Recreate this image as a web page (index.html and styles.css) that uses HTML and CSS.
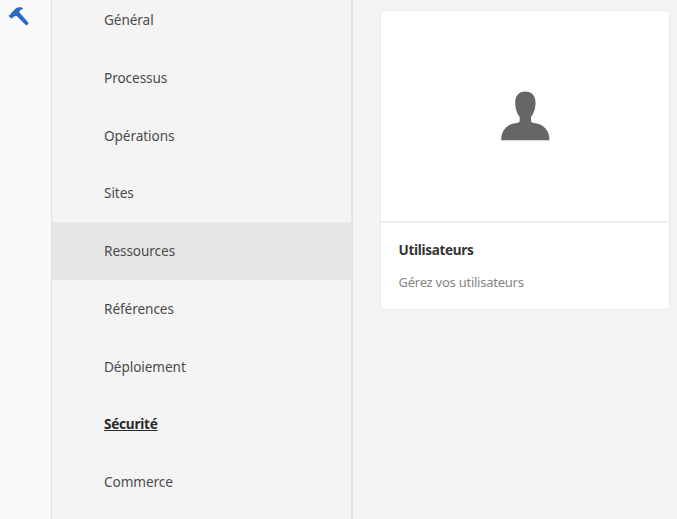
FILE: index.html
```html
<!DOCTYPE html>
<html lang="fr">
<head>
<meta charset="utf-8">
<title>Outils</title>
<link rel="stylesheet" href="styles.css">
</head>
<body>
<div class="shell">
  <aside class="rail">
    <svg class="hammer" viewBox="0 0 22 20" aria-hidden="true">
      <path d="M.4 8.700 L2.700 7.300 L3.500 5.700 L8 1.300 C10 -.1 13.500 -.1 15 1.400 L14.600 2.400 C12.500 2.200 11.200 3.300 11.500 5.600 L20.200 15.400 Q20.900 16.200 19.700 17.600 Q18.600 18.900 17.700 18 L8.700 8.900 L6.500 9.300 L5.300 10.200 L3.500 11.700 Z"/>
    </svg>
  </aside>
  <nav class="menu">
    <a class="item">Général</a>
    <a class="item">Processus</a>
    <a class="item">Opérations</a>
    <a class="item">Sites</a>
    <a class="item hovered">Ressources</a>
    <a class="item">Références</a>
    <a class="item">Déploiement</a>
    <a class="item selected">Sécurité</a>
    <a class="item">Commerce</a>
  </nav>
  <main class="content">
    <article class="card">
      <div class="preview">
        <svg class="user" viewBox="0 0 50 50" aria-hidden="true">
          <path d="M25.300 .5 C31.800 .5 35.500 4.500 35.500 12 C35.500 18.500 33.200 23 31 26 V29.500 C31 31.300 32 31.700 34.500 32 C44 33.200 49.500 39.500 49.500 49.200 H1.200 C1.200 39.500 6.700 33.200 16.200 32 C18.700 31.700 19.700 31.300 19.700 29.500 V26 C17.500 23 15.200 18.500 15.200 12 C15.200 4.500 18.900 .5 25.300 .5 Z"/>
        </svg>
      </div>
      <div class="caption">
        <h2 class="title">Utilisateurs</h2>
        <p class="text">Gérez vos utilisateurs</p>
      </div>
    </article>
  </main>
</div>
</body>
</html>
```
FILE: styles.css
```css
* { box-sizing: border-box; }
body {
  margin: 0;
  font-family: "Noto Sans", sans-serif;
  color: #4b4b4b;
  background: #f4f4f4;
  overflow: hidden;
}
.shell { display: flex; height: 519px; overflow: hidden; }
.rail {
  flex: 0 0 52px;
  padding: 7px 0 0 8px;
  background: #fafafa;
  border-right: 1px solid #e1e1e1;
}
.hammer { display: block; width: 22px; height: 20px; fill: #2969c8; }
.menu {
  flex: 0 0 301px;
  margin-top: -9px;
  border-right: 2px solid #e6e6e6;
}
.item {
  display: flex;
  align-items: center;
  height: 57.75px;
  padding: 0 0 0.7px 52px;
  font-size: 13.6px;
  letter-spacing: -0.07px;
}
.hovered { background: #e7e7e7; }
.selected { color: #292929; font-weight: 700; text-decoration: underline; letter-spacing: -0.25px; }
.content { flex: 1; padding: 9px 0 0 26px; }
.card {
  width: 292px;
  height: 302px;
  background: #fff;
  border: 2px solid #efefef;
  border-radius: 5px;
}
.preview {
  display: flex;
  justify-content: center;
  height: 212px;
  padding-top: 80px;
  border-bottom: 2px solid #efefef;
}
.user { width: 50px; height: 50px; fill: #666; }
.caption { padding: 16px 17.5px; }
.title { margin: 0; font-size: 13.5px; line-height: 22px; letter-spacing: -0.3px; color: #333; }
.text { margin: 10px 0 0; font-size: 13px; line-height: 22px; letter-spacing: -0.25px; color: #858585; }
```
